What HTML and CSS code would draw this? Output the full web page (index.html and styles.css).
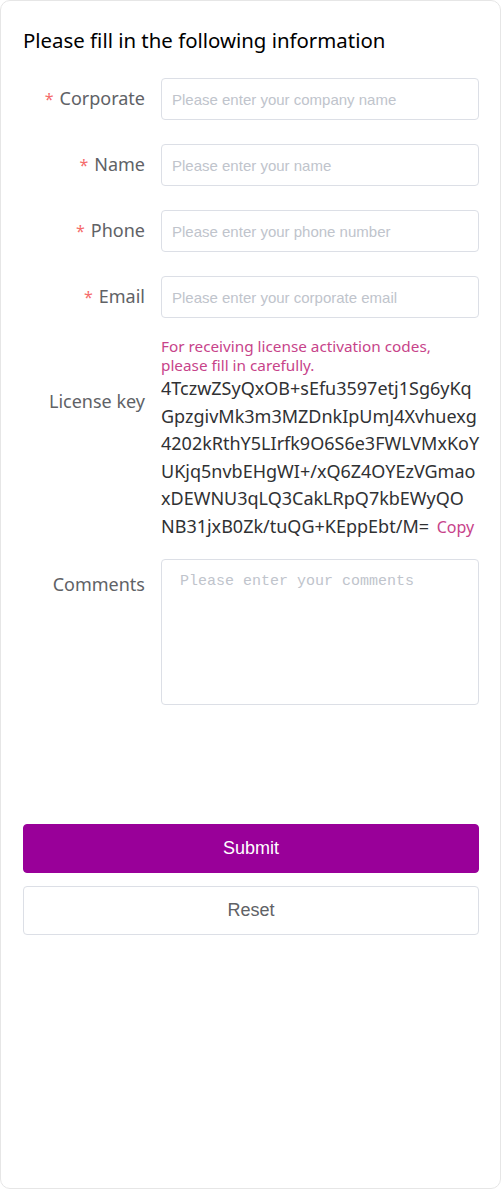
FILE: index.html
```html
<!DOCTYPE html>
<html lang="en">
<head>
<meta charset="utf-8">
<title>Form</title>
<link rel="stylesheet" href="styles.css">
</head>
<body>
<div class="card">
  <h2 class="title">Please fill in the following information</h2>
  <form class="form">
    <div class="row">
      <label class="label"><span class="req">*</span>Corporate</label>
      <div class="field"><input class="input" type="text" placeholder="Please enter your company name"></div>
    </div>
    <div class="row">
      <label class="label"><span class="req">*</span>Name</label>
      <div class="field"><input class="input" type="text" placeholder="Please enter your name"></div>
    </div>
    <div class="row">
      <label class="label"><span class="req">*</span>Phone</label>
      <div class="field"><input class="input" type="text" placeholder="Please enter your phone number"></div>
    </div>
    <div class="row">
      <label class="label"><span class="req">*</span>Email</label>
      <div class="field"><input class="input" type="text" placeholder="Please enter your corporate email"></div>
    </div>
    <div class="row row-hint">
      <span class="label"></span>
      <p class="hint">For receiving license activation codes,<br>please fill in carefully.</p>
    </div>
    <div class="row row-key">
      <label class="label label-key">License key</label>
      <div class="key"><span class="line">4TczwZSyQxOB+sEfu3597etj1Sg6yKq</span><span class="line">GpzgivMk3m3MZDnkIpUmJ4Xvhuexg</span><span class="line">4202kRthY5LIrfk9O6S6e3FWLVMxKoY</span><span class="line">UKjq5nvbEHgWI+/xQ6Z4OYEzVGmao</span><span class="line">xDEWNU3qLQ3CakLRpQ7kbEWyQO</span><span class="line">NB31jxB0Zk/tuQG+KEppEbt/M= <a class="copy" href="#">Copy</a></span></div>
    </div>
    <div class="row row-comments">
      <label class="label label-comments">Comments</label>
      <div class="field"><textarea class="textarea" placeholder="Please enter your comments"></textarea></div>
    </div>
    <div class="actions">
      <button type="button" class="btn btn-primary">Submit</button>
      <button type="reset" class="btn">Reset</button>
    </div>
  </form>
</div>
</body>
</html>
```

FILE: styles.css
```css
* { box-sizing: border-box; }
html, body { margin: 0; padding: 0; background: #ffffff; }
body { font-family: "Noto Sans", "Open Sans", sans-serif; }

.card {
  width: 501px;
  height: 1189px;
  border: 1px solid #e6e6e6;
  border-radius: 10px;
  background: #fff;
  padding: 0 21px 0 22px;
}

.title {
  margin: 0;
  padding-top: 25px;
  height: 77px;
  font-size: 20.4px;
  font-weight: 400;
  line-height: 28px;
  color: #000;
}

.form { display: flex; flex-direction: column; }

.row { display: flex; align-items: flex-start; margin-bottom: 24px; }

.label {
  flex: 0 0 138px;
  width: 138px;
  padding-right: 16px;
  text-align: right;
  font-size: 18px;
  line-height: 40px;
  color: #606266;
  white-space: nowrap;
}
.req { color: #f56c6c; font-size: 16px; margin-right: 6px; }

.field { flex: 1; min-width: 0; }

.input {
  display: block;
  width: 100%;
  height: 42px;
  border: 1px solid #dcdfe6;
  border-radius: 4px;
  padding: 0 10px;
  font-family: "Liberation Sans", Arial, sans-serif;
  font-size: 15px;
  color: #606266;
  outline: none;
}
.input::placeholder { color: #c0c4cc; }

.row-hint { margin-bottom: 0; margin-top: -5px; }
.row-hint .label { line-height: 19px; }
.hint {
  margin: 0;
  font-size: 15.3px;
  line-height: 19px;
  color: #c7438a;
}

.row-key { margin-bottom: 17px; }
.label-key { line-height: 52px; }
.key {
  flex: 1;
  font-size: 18px;
  line-height: 27.6px;
  color: #303133;
}
.key .line { display: block; white-space: nowrap; }
.copy {
  font-size: 16px;
  margin-left: 3px;
  color: #c7438a;
  text-decoration: none;
}

.row-comments { margin-bottom: 0; }
.label-comments { line-height: 50px; }
.textarea {
  display: block;
  width: 100%;
  height: 146px;
  border: 1px solid #dcdfe6;
  border-radius: 4px;
  padding: 13px 18px;
  resize: none;
  font-family: "Liberation Mono", monospace;
  font-size: 15px;
  line-height: 18px;
  color: #606266;
  outline: none;
}
.textarea::placeholder { color: #c0c4cc; }

.actions {
  display: flex;
  flex-direction: column;
  gap: 13px;
  margin-top: 119px;
}
.btn {
  display: block;
  width: 100%;
  height: 49px;
  border: 1px solid #dcdfe6;
  border-radius: 4px;
  background: #fff;
  font-family: "Liberation Sans", Arial, sans-serif;
  font-size: 18px;
  color: #606266;
  cursor: pointer;
}
.btn-primary {
  background: #990099;
  border-color: #990099;
  color: #fff;
}
```
